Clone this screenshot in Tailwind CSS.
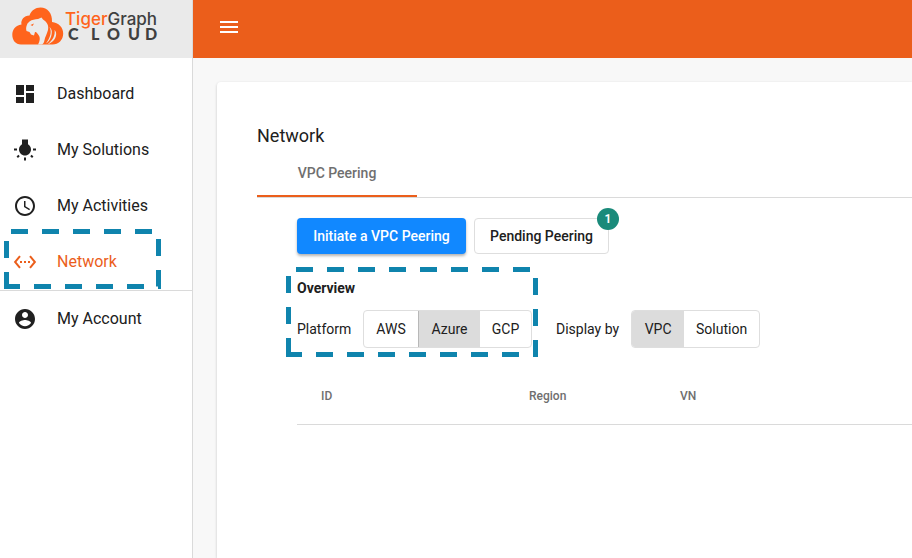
<!DOCTYPE html>
<html lang="en">
<head>
<meta charset="utf-8">
<meta name="viewport" content="width=device-width, initial-scale=1">
<title>TigerGraph Cloud - Network</title>
<script src="https://cdn.jsdelivr.net/npm/@tailwindcss/browser@4"></script>
</head>
<body class="relative flex min-h-screen overflow-x-hidden bg-[#f8f8f8] font-[Roboto,sans-serif] text-sm text-[#202020]">
  <aside class="flex w-[193px] shrink-0 flex-col border-r border-[#dadada] bg-white">
    <a href="#" aria-label="TigerGraph Cloud" class="flex h-[58px] items-start bg-[#eaeaea]">
      <svg class="h-[58px] w-[170px]" viewBox="0 0 170 58">
        <path d="M21 44.500C15.500 44.500 12.300 40 12.300 35C12.300 29.500 15.500 25.500 21.500 24.500C20.500 20 24 15.500 29.500 15.500C31 10.500 35.500 7.500 40.500 7.500C47.500 7.500 52.500 13 52 22C58.500 22.500 63.200 27.500 63.200 33.500C63.200 40 58.500 44.500 52.500 44.500Z" fill="#ff641c"/>
        <path d="M27.500 23.500L29.500 21.500C32 19.500 35 19.500 38 19L41.500 17.500L43 19.500C47 22 49 25.500 48 30C47 34 45 37 44.500 40C44.200 42 43.500 43.500 42 44.500H38C40 41 40.500 37.500 38.500 35C37.500 33 36 31.500 35 32L34 35.500L31 34.500L29.500 32L26.500 31C25.500 28 26.500 26 27.500 23.500Z" fill="#eaeaea"/>
        <path d="M30.500 25L34 23.500L32.500 26Z" fill="#ff641c"/>
        <path d="M49.500 27C52 32 50.500 37 46 43.500C50 41 52 36 51.800 31C51.500 29 50.500 28 49.500 27Z" fill="#eaeaea"/>
        <path d="M54.500 30C55.500 35 53 40 47.500 44.300C53.500 42.500 57 37 56 32.500C55.700 31.500 55.200 30.500 54.500 30Z" fill="#eaeaea"/>
        <text x="65" y="25" font-family="Inter, sans-serif" font-size="17" font-weight="500" fill="#ff641c">Tiger<tspan fill="#404040">Graph</tspan></text>
        <text x="68 91 107 128 145" y="40" font-family="Lato, sans-serif" font-size="16" font-weight="900" fill="#404040">CLOUD</text>
      </svg>
    </a>
    <nav class="flex flex-col pt-2 text-base">
      <a href="#" class="flex h-14 items-center gap-5 pl-[13px]"><svg class="size-6" viewBox="0 0 24 24" fill="currentColor"><path d="M3 13h8V3H3v10zm0 8h8v-6H3v6zm10 0h8V11h-8v10zm0-18v6h8V3h-8z"/></svg>Dashboard</a>
      <a href="#" class="flex h-14 items-center gap-5 pl-[13px]"><svg class="size-6" viewBox="0 0 24 24" fill="currentColor"><path d="M3.550 18.540l1.410 1.410 1.800-1.790-1.410-1.410-1.800 1.790zM11 22.450h2V19.500h-2v2.950zM4 10.500H1v2h3v-2zm11-4.190V1.500H9v4.810C7.210 7.350 6 9.280 6 11.500c0 3.310 2.690 6 6 6s6-2.690 6-6c0-2.220-1.210-4.150-3-5.190zm5 4.190v2h3v-2h-3zm-2.760 7.660l1.790 1.800 1.410-1.410-1.800-1.790-1.400 1.400z"/></svg>My Solutions</a>
      <a href="#" class="flex h-14 items-center gap-5 pl-[13px]"><svg class="size-6" viewBox="0 0 24 24" fill="currentColor"><path d="M11.990 2C6.470 2 2 6.480 2 12s4.470 10 9.990 10C17.520 22 22 17.520 22 12S17.520 2 11.990 2zM12 20c-4.420 0-8-3.580-8-8s3.580-8 8-8 8 3.580 8 8-3.580 8-8 8zm.5-13H11v6l5.250 3.150.75-1.230-4.500-2.670z"/></svg>My Activities</a>
      <a href="#" aria-current="page" class="flex h-14 items-center gap-5 pl-[13px] text-[#eb5e1b]"><svg class="size-6" viewBox="0 0 24 24" fill="currentColor"><path d="M7.770 6.760L6.230 5.480.820 12l5.410 6.520 1.540-1.280L3.420 12l4.350-5.240zM7 13h2v-2H7v2zm10-2h-2v2h2v-2zm-6 2h2v-2h-2v2zm6.770-7.520l-1.540 1.280L20.580 12l-4.350 5.240 1.540 1.280L23.180 12l-5.410-6.520z"/></svg>Network</a>
      <a href="#" class="flex h-14 items-center gap-5 border-t border-[#dadada] pl-[13px]"><svg class="size-6" viewBox="0 0 24 24" fill="currentColor"><path d="M12 2C6.480 2 2 6.480 2 12s4.480 10 10 10 10-4.480 10-10S17.520 2 12 2zm0 3c1.660 0 3 1.340 3 3s-1.340 3-3 3-3-1.340-3-3 1.340-3 3-3zm0 14.200c-2.500 0-4.710-1.280-6-3.220.030-1.990 4-3.080 6-3.080 1.990 0 5.970 1.090 6 3.080-1.290 1.940-3.500 3.220-6 3.220z"/></svg>My Account</a>
    </nav>
  </aside>

  <div class="flex min-w-0 flex-1 flex-col">
    <header class="flex h-[58px] shrink-0 items-center bg-[#eb5e1b] pb-1 pl-6">
      <button type="button" aria-label="Toggle menu" class="text-white"><svg class="size-6" viewBox="0 0 24 24" fill="currentColor"><path d="M3 18h18v-2H3v2zm0-5h18v-2H3v2zm0-7v2h18V6H3z"/></svg></button>
    </header>
    <main class="flex flex-1 flex-col pt-6 pl-6">
      <section class="flex-1 rounded-tl-sm bg-white pt-10 pl-10 shadow-[0_1px_3px_rgba(0,0,0,0.2)]">
        <h1 class="pt-0.5 text-lg leading-6">Network</h1>
        <div role="tablist" class="flex border-b border-[#dadada]">
          <button type="button" role="tab" aria-selected="true" class="h-[49px] w-40 border-b-2 border-[#eb5e1b] pt-0.5 font-medium text-[#6f6f6f]">VPC Peering</button>
        </div>
        <div class="pt-5 pl-10">
          <div class="flex gap-2">
            <button type="button" class="h-9 w-[169px] rounded bg-[#1188ff] font-medium text-white shadow-[0_2px_3px_rgba(0,0,0,0.3)]">Initiate a VPC Peering</button>
            <button type="button" class="relative h-9 w-[135px] rounded border border-[#dedede] bg-white font-medium">Pending Peering<span class="absolute -top-[11px] -right-[11px] flex size-[22px] items-center justify-center rounded-full bg-[#1a8a7a] text-xs font-semibold text-white">1</span></button>
          </div>
          <h2 class="pt-6 font-bold leading-5">Overview</h2>
          <div class="flex items-center pt-3">
            <span class="w-[66px]">Platform</span>
            <div role="group" aria-label="Platform" class="flex h-[38px] overflow-hidden rounded border border-[#dedede]">
              <button type="button" class="w-[54px]">AWS</button>
              <button type="button" aria-pressed="true" class="w-[62px] border-l border-[#b8b8b8] bg-[#dcdcdc]">Azure</button>
              <button type="button" class="w-[51px]">GCP</button>
            </div>
            <span class="pr-3 pl-6">Display by</span>
            <div role="group" aria-label="Display by" class="flex h-[38px] overflow-hidden rounded border border-[#dedede]">
              <button type="button" aria-pressed="true" class="w-[52px] bg-[#dcdcdc]">VPC</button>
              <button type="button" class="w-[75px]">Solution</button>
            </div>
          </div>
          <table class="mt-5 w-full table-fixed text-left text-xs text-[#6f6f6f]">
            <thead>
              <tr class="h-14 border-b border-[#dadada]">
                <th class="w-[232px] pl-6 font-medium">ID</th>
                <th class="w-[151px] font-medium">Region</th>
                <th class="font-medium">VN</th>
              </tr>
            </thead>
          </table>
        </div>
      </section>
    </main>
  </div>

  <svg class="pointer-events-none absolute top-0 left-0 h-[558px] w-[600px]" viewBox="0 0 600 558" fill="none" stroke="#0f84ad" stroke-width="5" stroke-dasharray="17 14" aria-hidden="true">
    <path d="M6.500 289V231.500H158.500V286.500H4"/>
    <path d="M288.500 355V269.500H535.500V354.500H286"/>
  </svg>
</body>
</html>
